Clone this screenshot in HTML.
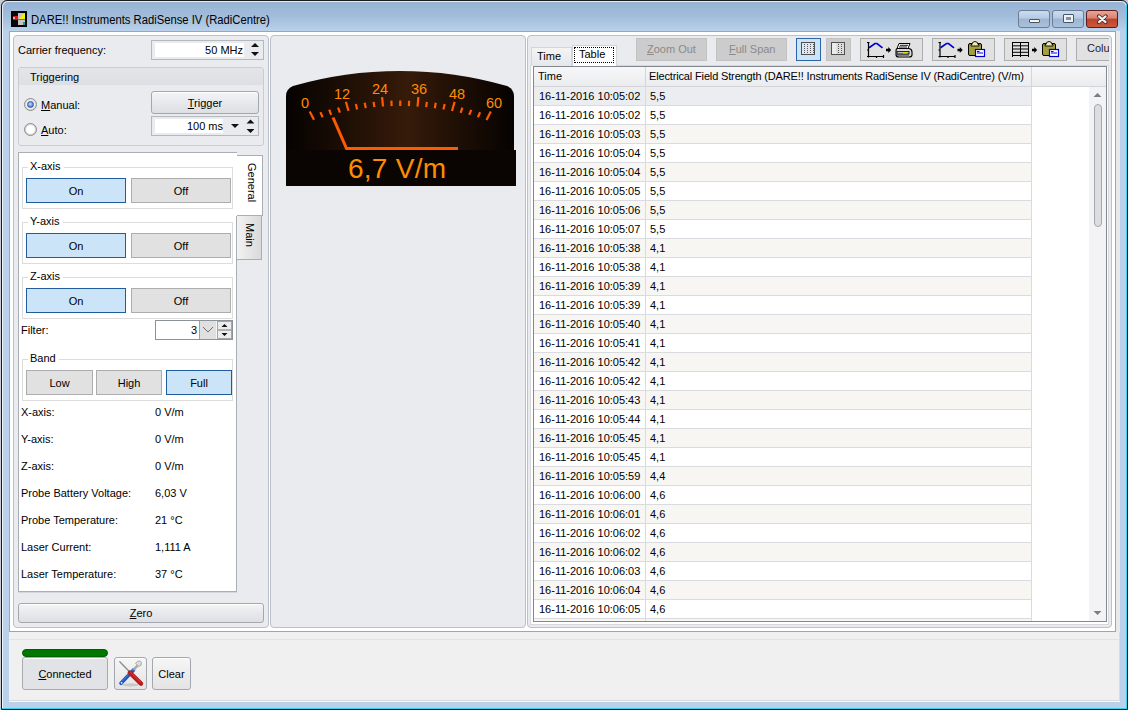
<!DOCTYPE html>
<html><head><meta charset="utf-8">
<style>
*{box-sizing:border-box}
html,body{margin:0;padding:0}
body{width:1128px;height:710px;overflow:hidden;position:relative;background:#c8ccd2;font-family:"Liberation Sans",sans-serif;font-size:11px;color:#000}
.a{position:absolute}
.t{position:absolute;white-space:nowrap;line-height:13px}
.pan{position:absolute;border:1px solid #bcc0c8;border-radius:4px;background:#e9ebef}
.grp{position:absolute;border:1px solid #dcdcdc}
.gl{position:absolute;background:#fff;padding:0 3px 0 2px;line-height:13px;white-space:nowrap}
.bon{position:absolute;border:1px solid #1f5d9e;background:#cce4f7;text-align:center;line-height:24px}
.boff{position:absolute;border:1px solid #adadad;background:#e1e1e1;text-align:center;line-height:24px}
.btn{position:absolute;border:1px solid #a3a7af;border-radius:3px;background:linear-gradient(#f3f4f6,#e8e9ed 50%,#dddfe3);box-shadow:inset 0 1px 0 #fff;text-align:center}
.u{text-decoration:underline;text-underline-offset:1px}
.tb{position:absolute;border:1px solid #adadad;background:#e1e1e1;top:38px;height:23px}
</style></head>
<body>
<!-- window frame -->
<div class="a" style="left:1px;top:0;width:1127px;height:710px;border:1px solid #1a1a1a;border-radius:6px 6px 0 0;background:linear-gradient(#96b2d3 0px,#a3bedc 16px,#b9d1ea 30px,#b9d1ea 100%)"></div>
<div class="a" style="left:2px;top:1px;width:1125px;height:708px;border:1px solid rgba(255,255,255,.75);border-bottom:none;border-radius:6px 6px 0 0"></div>
<div class="a" style="left:1126px;top:4px;width:1px;height:705px;background:#3fd0ef"></div>
<div class="a" style="left:2px;top:708px;width:1125px;height:1px;background:#3fd0ef"></div>
<!-- title -->
<svg class="a" style="left:11px;top:11px" width="16" height="16" viewBox="0 0 16 16">
 <rect x="0" y="0" width="16" height="16" fill="#000"/>
 <rect x="2" y="2" width="5" height="12" fill="#0a0a0a"/>
 <rect x="2" y="5" width="5" height="4" fill="#e81010"/>
 <rect x="2" y="6" width="2" height="2" fill="#b8b8b8"/>
 <rect x="7" y="2" width="7" height="12" fill="#c4c4c4"/>
 <path d="M8 8 L14 2 L14 8Z" fill="#f5f000"/>
 <path d="M8 8 L11 4 L14 2 L14 9 L8 9Z" fill="#f5f000"/>
 <rect x="7" y="8" width="7" height="1" fill="#808000"/>
 <rect x="12" y="11" width="2" height="3" fill="#1a9a9a"/>
</svg>
<div class="t" style="left:31px;top:12px;font-size:12.5px;transform:scaleX(0.9);transform-origin:0 0;color:#000;line-height:16px">DARE!! Instruments RadiSense IV (RadiCentre)</div>
<!-- caption buttons -->
<div class="a" style="left:1018px;top:10px;width:32px;height:18px;border:1px solid #6b7d94;border-radius:3px;background:linear-gradient(#cbdcef,#b6cbe3 45%,#9cb5d2 50%,#a9c1dc)"><div class="a" style="left:10px;top:8px;width:11px;height:4px;background:#f2f2f2;border:1px solid #4a5566;border-radius:1px"></div></div>
<div class="a" style="left:1052px;top:10px;width:32px;height:18px;border:1px solid #6b7d94;border-radius:3px;background:linear-gradient(#cbdcef,#b6cbe3 45%,#9cb5d2 50%,#a9c1dc)"><div class="a" style="left:10px;top:3px;width:11px;height:9px;background:#f2f2f2;border:1px solid #4a5566;border-radius:1px"><div class="a" style="left:2px;top:2px;width:5px;height:3px;background:#7d94b0"></div></div></div>
<div class="a" style="left:1086px;top:10px;width:32px;height:18px;border:1px solid #5a1d1d;border-radius:3px;background:linear-gradient(#e9a596,#d9826f 45%,#c0412a 50%,#c85a3e)">
  <svg class="a" style="left:9px;top:3px" width="13" height="11" viewBox="0 0 13 11"><path d="M2.8 2.2 L9.8 8.3 M9.8 2.2 L2.8 8.3" stroke="#3d2a2a" stroke-width="3.6" stroke-linecap="round"/><path d="M3 2.4 L9.6 8.1 M9.6 2.4 L3 8.1" stroke="#f2f2f2" stroke-width="2.1" stroke-linecap="round"/></svg>
</div>

<!-- client area -->
<div class="a" style="left:9px;top:31px;width:1107px;height:601px;border:1px solid #9fa4ad;background:#fff"></div>
<div class="a" style="left:1116px;top:31px;width:4px;height:601px;background:#e9e9e9"></div>
<div class="a" style="left:9px;top:632px;width:1111px;height:69px;background:#f0f0f0;border-bottom:1px solid #dadada;border-right:1px solid #dcdcdc"></div><div class="a" style="left:9px;top:701px;width:1111px;height:1px;background:#f8f8f8"></div>
<div class="a" style="left:9px;top:639px;width:1110px;height:1px;background:#e2e2e2"></div>

<!-- panels -->
<div class="pan" style="left:13px;top:35px;width:256px;height:593px"></div>
<div class="pan" style="left:270px;top:35px;width:256px;height:593px"></div>
<div class="pan" style="left:527px;top:35px;width:585px;height:593px"></div>

<!-- LEFT PANEL -->
<div class="t" style="left:18px;top:44px">Carrier frequency:</div>
<div class="a" style="left:151px;top:40px;width:113px;height:20px;border:1px solid #b4b8bf;background:#e9ebef"></div>
<div class="a" style="left:155px;top:43px;width:89px;height:14px;background:#fff"></div>
<div class="t" style="left:155px;top:44px;width:88px;text-align:right">50 MHz</div>
<svg class="a" style="left:250px;top:42px" width="10" height="16"><path d="M1 5 L5 1 L9 5Z M1 10 L5 14 L9 10Z" fill="#111"/></svg>

<div class="a" style="left:18px;top:67px;width:246px;height:79px;border:1px solid #c9ccd3;border-radius:3px;background:#e9ebef;overflow:hidden">
  <div class="a" style="left:0;top:0;width:244px;height:18px;background:linear-gradient(#e3e5e9,#dcdfe4);border-bottom:1px solid #e8eaee"></div>
</div>
<div class="t" style="left:30px;top:71px">Triggering</div>
<!-- radios -->
<div class="a" style="left:24px;top:98px;width:13px;height:13px;border-radius:50%;border:1px solid #8c8c8c;box-shadow:inset 0 0 0 1px #d8d8d8;background:#f4f4f4"><div class="a" style="left:2px;top:2px;width:7px;height:7px;border-radius:50%;border:1px solid #3256a8;background:radial-gradient(circle at 45% 40%,#d4e4fb,#5f8be0 60%,#3a64c0)"></div></div>
<div class="t" style="left:41px;top:99px"><span class="u">M</span>anual:</div>
<div class="a" style="left:24px;top:123px;width:13px;height:13px;border-radius:50%;border:1px solid #8c8c8c;box-shadow:inset 0 0 0 1px #d4d4d4;background:radial-gradient(circle,#fff 45%,#ececec)"></div>
<div class="t" style="left:41px;top:124px"><span class="u">A</span>uto:</div>
<div class="btn" style="left:151px;top:91px;width:108px;height:23px;line-height:22px"><span class="u">T</span>rigger</div>
<div class="a" style="left:151px;top:116px;width:108px;height:20px;border:1px solid #b4b8bf;background:#e9ebef"></div>
<div class="a" style="left:155px;top:119px;width:68px;height:14px;background:#fff"></div>
<div class="t" style="left:155px;top:120px;width:68px;text-align:right">100 ms</div>
<svg class="a" style="left:230px;top:119px" width="24" height="16"><path d="M1 5 L9 5 L5 9Z" fill="#111"/><path d="M16.5 4.5 L20.5 0.5 L24.5 4.5Z M16.5 10 L20.5 14 L24.5 10Z" fill="#111"/></svg>

<!-- tab control -->
<div class="a" style="left:236px;top:155px;width:27px;height:61px;background:#fff;border:1px solid #a9adb4;border-left:none"></div>
<div class="a" style="left:237px;top:215px;width:25px;height:45px;background:linear-gradient(90deg,#f2f2f2,#dadada);border:1px solid #a9adb4;border-left:none"></div>
<div class="t" style="left:245px;top:163px;writing-mode:vertical-rl;line-height:14px">General</div>
<div class="t" style="left:243px;top:223px;writing-mode:vertical-rl;line-height:14px">Main</div>
<div class="a" style="left:18px;top:152px;width:219px;height:440px;background:#fff;border:1px solid #a9adb4;border-right:none;box-shadow:0 1px 0 #d4d6da"></div>
<div class="a" style="left:236px;top:216px;width:1px;height:376px;background:#a9adb4"></div>

<!-- X/Y/Z groups -->
<div class="grp" style="left:22px;top:167px;width:211px;height:42px"></div>
<div class="gl" style="left:28px;top:160px">X-axis</div>
<div class="bon" style="left:26px;top:178px;width:100px;height:25px">On</div>
<div class="boff" style="left:131px;top:178px;width:100px;height:25px">Off</div>

<div class="grp" style="left:22px;top:222px;width:211px;height:42px"></div>
<div class="gl" style="left:28px;top:215px">Y-axis</div>
<div class="bon" style="left:26px;top:233px;width:100px;height:25px">On</div>
<div class="boff" style="left:131px;top:233px;width:100px;height:25px">Off</div>

<div class="grp" style="left:22px;top:277px;width:211px;height:42px"></div>
<div class="gl" style="left:28px;top:270px">Z-axis</div>
<div class="bon" style="left:26px;top:288px;width:100px;height:25px">On</div>
<div class="boff" style="left:131px;top:288px;width:100px;height:25px">Off</div>

<div class="t" style="left:21px;top:324px">Filter:</div>
<div class="a" style="left:155px;top:320px;width:78px;height:20px;border:1px solid #8b929c;background:#fff"></div>
<div class="a" style="left:199px;top:321px;width:18px;height:18px;background:#e0e0e0;border-left:1px solid #a2a2a2;border-right:1px solid #f6f6f6"></div>
<div class="a" style="left:217px;top:321px;width:15px;height:18px;background:#ececec;border:1px solid #a6a6a6"></div><div class="a" style="left:218px;top:329px;width:13px;height:2px;background:#b0b0b0"></div>
<div class="t" style="left:156px;top:324px;width:41px;text-align:right">3</div>
<svg class="a" style="left:202px;top:326px" width="12" height="8"><path d="M1 1 L6 6 L11 1" fill="none" stroke="#6d6d6d" stroke-width="1"/></svg>
<svg class="a" style="left:219px;top:321px" width="11" height="18"><path d="M2.5 6 L5.5 3 L8.5 6Z M2.5 12 L5.5 15 L8.5 12Z" fill="#111"/></svg>

<div class="grp" style="left:22px;top:359px;width:211px;height:42px"></div>
<div class="gl" style="left:28px;top:352px">Band</div>
<div class="boff" style="left:26px;top:370px;width:67px;height:25px">Low</div>
<div class="boff" style="left:96px;top:370px;width:66px;height:25px">High</div>
<div class="bon" style="left:166px;top:370px;width:66px;height:25px">Full</div>

<div class="t" style="left:21px;top:406px">X-axis:</div><div class="t" style="left:155px;top:406px">0 V/m</div>
<div class="t" style="left:21px;top:433px">Y-axis:</div><div class="t" style="left:155px;top:433px">0 V/m</div>
<div class="t" style="left:21px;top:460px">Z-axis:</div><div class="t" style="left:155px;top:460px">0 V/m</div>
<div class="t" style="left:21px;top:487px">Probe Battery Voltage:</div><div class="t" style="left:155px;top:487px">6,03 V</div>
<div class="t" style="left:21px;top:514px">Probe Temperature:</div><div class="t" style="left:155px;top:514px">21 &#176;C</div>
<div class="t" style="left:21px;top:541px">Laser Current:</div><div class="t" style="left:155px;top:541px">1,111 A</div>
<div class="t" style="left:21px;top:568px">Laser Temperature:</div><div class="t" style="left:155px;top:568px">37 &#176;C</div>

<div class="btn" style="left:18px;top:603px;width:246px;height:20px;line-height:18px"><span class="u">Z</span>ero</div>

<!-- MIDDLE: gauge -->
<svg class="a" style="left:0;top:0" width="1128" height="200">
  <defs>
    <linearGradient id="gg" x1="0" x2="1" y1="0" y2="0">
      <stop offset="0" stop-color="#050201"/>
      <stop offset="0.53" stop-color="#361b09"/>
      <stop offset="1" stop-color="#050201"/>
    </linearGradient>
  </defs>
  <path d="M286 96 Q286 89 293 86 Q345 71 400 71 Q455 71 507 86 Q514 89 514 96 L514 150 L286 150Z" fill="url(#gg)"/>
  <rect x="286" y="150" width="230" height="36" fill="#0a0502"/>
  <g stroke="#ff5a00" stroke-width="2.2" stroke-linecap="butt">
  <line x1="314.0" y1="119.8" x2="309.7" y2="111.4"/><line x1="322.6" y1="117.2" x2="320.4" y2="112.1"/><line x1="331.2" y1="114.8" x2="329.2" y2="109.6"/><line x1="339.9" y1="112.7" x2="338.1" y2="107.5"/><line x1="348.5" y1="110.9" x2="345.9" y2="101.8"/><line x1="357.1" y1="109.4" x2="355.9" y2="104.0"/><line x1="365.8" y1="108.1" x2="364.7" y2="102.7"/><line x1="374.4" y1="107.2" x2="373.6" y2="101.8"/><line x1="383.0" y1="106.5" x2="382.1" y2="97.1"/><line x1="391.6" y1="106.1" x2="391.4" y2="100.6"/><line x1="400.2" y1="106.0" x2="400.3" y2="100.5"/><line x1="408.9" y1="106.1" x2="409.1" y2="100.7"/><line x1="417.5" y1="106.6" x2="418.4" y2="97.1"/><line x1="426.1" y1="107.2" x2="426.9" y2="101.8"/><line x1="434.8" y1="108.2" x2="435.8" y2="102.8"/><line x1="443.4" y1="109.5" x2="444.7" y2="104.1"/><line x1="452.0" y1="111.0" x2="454.6" y2="101.9"/><line x1="460.6" y1="112.8" x2="462.4" y2="107.6"/><line x1="469.2" y1="114.9" x2="471.3" y2="109.8"/><line x1="477.9" y1="117.3" x2="480.1" y2="112.3"/><line x1="486.5" y1="120.0" x2="490.8" y2="111.5"/>
  </g>
  <path d="M333 117.5 L346.5 148.5 L458 148.5" fill="none" stroke="#ff5a00" stroke-width="3"/>
  <g fill="#ff8c00" font-family="Liberation Sans" font-size="14.5" text-anchor="middle">
    <text x="305" y="108">0</text><text x="342" y="98.5">12</text><text x="380" y="93.5">24</text><text x="419" y="93.5">36</text><text x="457" y="98.5">48</text><text x="494" y="108">60</text>
  </g>
  <text x="348" y="177.5" fill="#ff8c00" font-family="Liberation Sans" font-size="28" textLength="98" lengthAdjust="spacing">6,7 V/m</text>
</svg>

<!-- RIGHT PANEL -->
<div class="a" style="left:530px;top:65px;width:579px;height:560px;background:#fff;border:1px solid #d6d8dc"></div>
<div class="a" style="left:531px;top:47px;width:41px;height:19px;background:linear-gradient(#f4f4f5,#e6e7ea);border:1px solid #d3d5d9;border-bottom:none"></div>
<div class="a" style="left:572px;top:45px;width:45px;height:21px;background:#fff;border:1px solid #d3d5d9;border-bottom:none"></div>
<div class="t" style="left:537px;top:50px">Time</div>
<div class="a" style="left:574px;top:47px;width:40px;height:16px;border:1px dotted #000"></div>
<div class="t" style="left:579px;top:48px">Table</div>

<div class="tb" style="left:636px;width:71px;background:#cccccc;border-color:#c2c2c2"></div>
<div class="t" style="left:647px;top:43px;color:#8a8a8a"><span class="u">Z</span>oom Out</div>
<div class="tb" style="left:716px;width:71px;background:#cccccc;border-color:#c2c2c2"></div>
<div class="t" style="left:729px;top:43px;color:#8a8a8a"><span class="u">F</span>ull Span</div>
<div class="tb" style="left:796px;width:25px;background:#cce4f7;border-color:#2b64a8"></div>
<div class="tb" style="left:826px;width:25px;background:#cccccc;border-color:#c2c2c2"></div>
<div class="tb" style="left:860px;width:63px"></div>
<div class="tb" style="left:932px;width:63px"></div>
<div class="tb" style="left:1004px;width:63px"></div>
<div class="a" style="left:1076px;top:38px;width:33px;height:23px;overflow:hidden"><div class="tb" style="left:0;top:0;width:60px"></div><div class="t" style="left:11px;top:4px;color:#1e1e1e">Columns</div></div>


<svg class="a" style="left:0;top:0" width="1128" height="70">
 <!-- grid icon 1 -->
 <rect x="801.5" y="42.5" width="13" height="12" fill="#dfe8f2" stroke="#505050"/>
 <g fill="#707070">
  <path d="M804.5 44 V54 M807.5 44 V54 M810.5 44 V54 M813.5 44 V54" stroke="#555" stroke-width="1" stroke-dasharray="1 1"/>
 </g>
 <!-- grid icon 2 -->
 <rect x="831.5" y="42.5" width="13" height="12" fill="#dcdcdc" stroke="#505050"/>
 <rect x="832" y="43" width="4" height="11" fill="#ececec"/>
 <g fill="#707070">
  <path d="M838.5 44 V54 M841.5 44 V54" stroke="#555" stroke-width="1" stroke-dasharray="1 1"/>
 </g>
 <!-- chart icons -->
 <g id="ch">
  <path d="M868.5 42 V57.5 M867 56.5 H884 M867 42.5 H869.5 M867 50 H869 M876.5 56 V58 M883.5 55 V58" stroke="#000" stroke-width="1.2" fill="none"/>
  <path d="M869 47.8 L875 43.5 L877 43.5 L882.5 47.8" stroke="#0000d0" stroke-width="1.7" fill="none"/>
  <path d="M886 48.7 H888.3 V47 L891.2 50 L888.3 53 V51.3 H886Z" fill="#000"/>
 </g>
 <!-- printer -->
 <path d="M899 43.5 H910 L908 48.5 H897Z" fill="#fff" stroke="#000" stroke-width="1"/>
 <path d="M900 45.3 H908 M899 47 H907" stroke="#000" stroke-width=".9"/>
 <path d="M897.5 48.5 H909 Q912 49 912 52 V55 Q912 57 909 57 H899 Q896 57 896 55 V51 Q896 48.5 897.5 48.5Z" fill="#d8d8d8" stroke="#000" stroke-width="1.1"/>
 <rect x="897" y="51.5" width="12" height="2.5" fill="#bdbdbd" stroke="#000" stroke-width=".8"/>
 <rect x="903" y="52.2" width="4" height="1.2" fill="#f0e000"/>
 <path d="M896.5 55 H909" stroke="#000" stroke-width=".8"/>
 <!-- chart2 -->
 <g transform="translate(71.5,0)">
  <path d="M868.5 42 V57.5 M867 56.5 H884 M867 42.5 H869.5 M867 50 H869 M876.5 56 V58 M883.5 55 V58" stroke="#000" stroke-width="1.2" fill="none"/>
  <path d="M869 47.8 L875 43.5 L877 43.5 L882.5 47.8" stroke="#0000d0" stroke-width="1.7" fill="none"/>
  <path d="M886 48.7 H888.3 V47 L891.2 50 L888.3 53 V51.3 H886Z" fill="#000"/>
 </g>
 <!-- clipboard 1 -->
 <g id="clip">
  <rect x="968.5" y="43.5" width="13" height="12" rx="1.5" fill="#a59f3c" stroke="#000"/>
  <path d="M972 44.5 Q972 41.5 975 41.5 Q978 41.5 978 44.5 H979 V46 H971 V44.5Z" fill="#ecebc4" stroke="#000" stroke-width=".9"/>
  <rect x="975.5" y="49.5" width="9" height="7" fill="#fff" stroke="#0000d0" stroke-width="1.2"/>
  <path d="M977 53 H983 M977 51.5 H979.5" stroke="#0000d0" stroke-width="1"/>
 </g>
 <!-- table icon -->
 <g fill="none" stroke="#000" stroke-width="1">
  <rect x="1012.5" y="42.5" width="16" height="13"/>
  <path d="M1012 45.8 H1029 M1012 49 H1029 M1012 52.3 H1029 M1020.5 42 V56"/>
 </g>
 <path d="M1012.5 56 V57.5 M1020.5 56 V57.5 M1028.5 56 V57.5" stroke="#000" stroke-width="1" stroke-dasharray="1 1"/>
 <path d="M1032 48.7 H1034.3 V47 L1037.2 50 L1034.3 53 V51.3 H1032Z" fill="#000"/>
 <g transform="translate(74,0)">
  <rect x="968.5" y="43.5" width="13" height="12" rx="1.5" fill="#a59f3c" stroke="#000"/>
  <path d="M972 44.5 Q972 41.5 975 41.5 Q978 41.5 978 44.5 H979 V46 H971 V44.5Z" fill="#ecebc4" stroke="#000" stroke-width=".9"/>
  <rect x="975.5" y="49.5" width="9" height="7" fill="#fff" stroke="#0000d0" stroke-width="1.2"/>
  <path d="M977 53 H983 M977 51.5 H979.5" stroke="#0000d0" stroke-width="1"/>
 </g>
</svg>

<!-- grid -->
<div id="grid" class="a" style="left:533px;top:66px;width:574px;height:556px;border:1px solid #828790;background:#fff;overflow:hidden">
  <div class="a" style="left:0;top:0;width:572px;height:20px;background:linear-gradient(#f7f7f8,#ebecef);border-bottom:1px solid #d5d5d9"></div>
  <div class="a" style="left:111px;top:0;width:1px;height:20px;background:#d5d5d9"></div>
  <div class="a" style="left:497px;top:0;width:1px;height:20px;background:#d5d5d9"></div>
  <div class="t" style="left:4px;top:3px">Time</div>
  <div class="t" style="left:115px;top:3px;letter-spacing:-0.15px">Electrical Field Strength (DARE!! Instruments RadiSense IV (RadiCentre) (V/m)</div>
  <div id="rows"><div class="a" style="left:0;top:20px;width:498px;height:19px;background:#ecedf0;border-bottom:1px solid #dadbe0"></div><div class="t" style="left:5px;top:23px">16-11-2016 10:05:02</div><div class="t" style="left:116px;top:23px">5,5</div><div class="a" style="left:0;top:39px;width:498px;height:19px;background:#fff;border-bottom:1px solid #dadbe0"></div><div class="t" style="left:5px;top:42px">16-11-2016 10:05:02</div><div class="t" style="left:116px;top:42px">5,5</div><div class="a" style="left:0;top:58px;width:498px;height:19px;background:#f7f6f3;border-bottom:1px solid #dadbe0"></div><div class="t" style="left:5px;top:61px">16-11-2016 10:05:03</div><div class="t" style="left:116px;top:61px">5,5</div><div class="a" style="left:0;top:77px;width:498px;height:19px;background:#fff;border-bottom:1px solid #dadbe0"></div><div class="t" style="left:5px;top:80px">16-11-2016 10:05:04</div><div class="t" style="left:116px;top:80px">5,5</div><div class="a" style="left:0;top:96px;width:498px;height:19px;background:#f7f6f3;border-bottom:1px solid #dadbe0"></div><div class="t" style="left:5px;top:99px">16-11-2016 10:05:04</div><div class="t" style="left:116px;top:99px">5,5</div><div class="a" style="left:0;top:115px;width:498px;height:19px;background:#fff;border-bottom:1px solid #dadbe0"></div><div class="t" style="left:5px;top:118px">16-11-2016 10:05:05</div><div class="t" style="left:116px;top:118px">5,5</div><div class="a" style="left:0;top:134px;width:498px;height:19px;background:#f7f6f3;border-bottom:1px solid #dadbe0"></div><div class="t" style="left:5px;top:137px">16-11-2016 10:05:06</div><div class="t" style="left:116px;top:137px">5,5</div><div class="a" style="left:0;top:153px;width:498px;height:19px;background:#fff;border-bottom:1px solid #dadbe0"></div><div class="t" style="left:5px;top:156px">16-11-2016 10:05:07</div><div class="t" style="left:116px;top:156px">5,5</div><div class="a" style="left:0;top:172px;width:498px;height:19px;background:#f7f6f3;border-bottom:1px solid #dadbe0"></div><div class="t" style="left:5px;top:175px">16-11-2016 10:05:38</div><div class="t" style="left:116px;top:175px">4,1</div><div class="a" style="left:0;top:191px;width:498px;height:19px;background:#fff;border-bottom:1px solid #dadbe0"></div><div class="t" style="left:5px;top:194px">16-11-2016 10:05:38</div><div class="t" style="left:116px;top:194px">4,1</div><div class="a" style="left:0;top:210px;width:498px;height:19px;background:#f7f6f3;border-bottom:1px solid #dadbe0"></div><div class="t" style="left:5px;top:213px">16-11-2016 10:05:39</div><div class="t" style="left:116px;top:213px">4,1</div><div class="a" style="left:0;top:229px;width:498px;height:19px;background:#fff;border-bottom:1px solid #dadbe0"></div><div class="t" style="left:5px;top:232px">16-11-2016 10:05:39</div><div class="t" style="left:116px;top:232px">4,1</div><div class="a" style="left:0;top:248px;width:498px;height:19px;background:#f7f6f3;border-bottom:1px solid #dadbe0"></div><div class="t" style="left:5px;top:251px">16-11-2016 10:05:40</div><div class="t" style="left:116px;top:251px">4,1</div><div class="a" style="left:0;top:267px;width:498px;height:19px;background:#fff;border-bottom:1px solid #dadbe0"></div><div class="t" style="left:5px;top:270px">16-11-2016 10:05:41</div><div class="t" style="left:116px;top:270px">4,1</div><div class="a" style="left:0;top:286px;width:498px;height:19px;background:#f7f6f3;border-bottom:1px solid #dadbe0"></div><div class="t" style="left:5px;top:289px">16-11-2016 10:05:42</div><div class="t" style="left:116px;top:289px">4,1</div><div class="a" style="left:0;top:305px;width:498px;height:19px;background:#fff;border-bottom:1px solid #dadbe0"></div><div class="t" style="left:5px;top:308px">16-11-2016 10:05:42</div><div class="t" style="left:116px;top:308px">4,1</div><div class="a" style="left:0;top:324px;width:498px;height:19px;background:#f7f6f3;border-bottom:1px solid #dadbe0"></div><div class="t" style="left:5px;top:327px">16-11-2016 10:05:43</div><div class="t" style="left:116px;top:327px">4,1</div><div class="a" style="left:0;top:343px;width:498px;height:19px;background:#fff;border-bottom:1px solid #dadbe0"></div><div class="t" style="left:5px;top:346px">16-11-2016 10:05:44</div><div class="t" style="left:116px;top:346px">4,1</div><div class="a" style="left:0;top:362px;width:498px;height:19px;background:#f7f6f3;border-bottom:1px solid #dadbe0"></div><div class="t" style="left:5px;top:365px">16-11-2016 10:05:45</div><div class="t" style="left:116px;top:365px">4,1</div><div class="a" style="left:0;top:381px;width:498px;height:19px;background:#fff;border-bottom:1px solid #dadbe0"></div><div class="t" style="left:5px;top:384px">16-11-2016 10:05:45</div><div class="t" style="left:116px;top:384px">4,1</div><div class="a" style="left:0;top:400px;width:498px;height:19px;background:#f7f6f3;border-bottom:1px solid #dadbe0"></div><div class="t" style="left:5px;top:403px">16-11-2016 10:05:59</div><div class="t" style="left:116px;top:403px">4,4</div><div class="a" style="left:0;top:419px;width:498px;height:19px;background:#fff;border-bottom:1px solid #dadbe0"></div><div class="t" style="left:5px;top:422px">16-11-2016 10:06:00</div><div class="t" style="left:116px;top:422px">4,6</div><div class="a" style="left:0;top:438px;width:498px;height:19px;background:#f7f6f3;border-bottom:1px solid #dadbe0"></div><div class="t" style="left:5px;top:441px">16-11-2016 10:06:01</div><div class="t" style="left:116px;top:441px">4,6</div><div class="a" style="left:0;top:457px;width:498px;height:19px;background:#fff;border-bottom:1px solid #dadbe0"></div><div class="t" style="left:5px;top:460px">16-11-2016 10:06:02</div><div class="t" style="left:116px;top:460px">4,6</div><div class="a" style="left:0;top:476px;width:498px;height:19px;background:#f7f6f3;border-bottom:1px solid #dadbe0"></div><div class="t" style="left:5px;top:479px">16-11-2016 10:06:02</div><div class="t" style="left:116px;top:479px">4,6</div><div class="a" style="left:0;top:495px;width:498px;height:19px;background:#fff;border-bottom:1px solid #dadbe0"></div><div class="t" style="left:5px;top:498px">16-11-2016 10:06:03</div><div class="t" style="left:116px;top:498px">4,6</div><div class="a" style="left:0;top:514px;width:498px;height:19px;background:#f7f6f3;border-bottom:1px solid #dadbe0"></div><div class="t" style="left:5px;top:517px">16-11-2016 10:06:04</div><div class="t" style="left:116px;top:517px">4,6</div><div class="a" style="left:0;top:533px;width:498px;height:19px;background:#fff;border-bottom:1px solid #dadbe0"></div><div class="t" style="left:5px;top:536px">16-11-2016 10:06:05</div><div class="t" style="left:116px;top:536px">4,6</div><div class="a" style="left:0;top:552px;width:498px;height:19px;background:#f7f6f3;border-bottom:1px solid #dadbe0"></div><div class="t" style="left:5px;top:555px">16-11-2016 10:06:06</div><div class="t" style="left:116px;top:555px">4,6</div><div class="a" style="left:111px;top:20px;width:1px;height:540px;background:#dadbe0"></div><div class="a" style="left:497px;top:20px;width:1px;height:540px;background:#dadbe0"></div></div>
  <div class="a" style="left:555px;top:20px;width:18px;height:535px;background:#f3f3f5"></div>
  <svg class="a" style="left:555px;top:20px" width="17" height="535"><path d="M4.5 10 L8.5 6 L12.5 10Z" fill="#7a7d85"/><path d="M4.5 524 L8.5 528 L12.5 524Z" fill="#7a7d85"/>
  <rect x="5.5" y="17.5" width="7" height="122" rx="3.5" fill="#dcdde1" stroke="#a5a8ae"/></svg>
</div>

<!-- STATUS -->
<div class="a" style="left:22px;top:649px;width:86px;height:8px;border-radius:4px;background:#007800;border:1px solid #006000"></div>
<div class="btn" style="left:22px;top:657px;width:86px;height:33px;line-height:33px;background:#e2e3e6;border-color:#a8aab0"><span class="u">C</span>onnected</div>
<div class="btn" style="left:114px;top:657px;width:33px;height:33px;background:linear-gradient(#f6f6f6,#e4e4e4)"></div>
<svg class="a" style="left:114px;top:657px" width="33" height="33">
 <ellipse cx="16.5" cy="27.8" rx="8.5" ry="1.6" fill="#000" opacity=".13"/>
 <path d="M19.5 13 L7 26.3" stroke="#1d55c4" stroke-width="3.6" stroke-linecap="round"/>
 <path d="M19 12.5 L8 24.5" stroke="#5b8ee8" stroke-width="1" opacity=".7"/>
 <circle cx="7.6" cy="25.8" r=".9" fill="#e8f0ff"/>
 <path d="M19.5 13 L23.5 8.5" stroke="#a8a8a8" stroke-width="2.6"/>
 <path d="M21.5 6.5 Q23 3.5 26 4 L27.5 5.5 Q28 8.5 25 9.5 Z" fill="#dcdcdc" stroke="#9c9c9c" stroke-width=".8"/>
 <path d="M5.8 4.8 L15 14.3" stroke="#8a8a8a" stroke-width="1.3" stroke-linecap="round"/>
 <path d="M15.8 15.6 L27 26.6" stroke="#b81c1c" stroke-width="4.4" stroke-linecap="round"/>
 <path d="M16.5 15.2 L26.5 25.2" stroke="#e45b5b" stroke-width="1" opacity=".7"/>
</svg>
<div class="btn" style="left:152px;top:657px;width:39px;height:33px;line-height:33px;background:linear-gradient(#f6f6f6,#e4e4e4)">Clear</div>
</body></html>
